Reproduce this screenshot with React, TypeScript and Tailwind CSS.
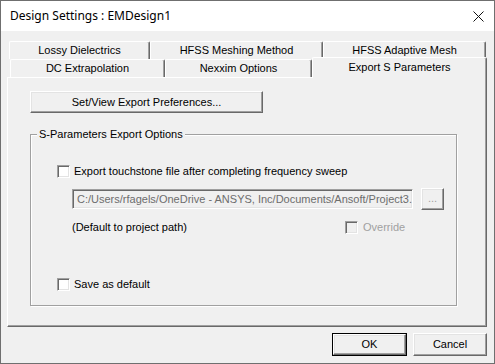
import React from "react";

const raised =
  "border border-t-white border-l-white border-r-[#696969] border-b-[#696969] shadow-[inset_-1px_-1px_0_#a0a0a0,inset_1px_1px_0_#e3e3e3]";
const sunken =
  "border border-t-[#a0a0a0] border-l-[#a0a0a0] border-r-white border-b-white shadow-[inset_1px_1px_0_#696969,inset_-1px_-1px_0_#e3e3e3]";

function Check({ disabled = false }: { disabled?: boolean }) {
  return (
    <div
      className={`w-[13px] h-[13px] shrink-0 ${sunken} ${disabled ? "bg-[#f0f0f0]" : "bg-white"}`}
    />
  );
}

function Tab({ label, w, selected = false }: { label: string; w: number; selected?: boolean }) {
  return (
    <div
      style={{ width: w }}
      className={
        selected
          ? "relative z-10 -mt-[2px] h-[21px] shrink-0 flex items-center justify-center pb-[2px] bg-[#f0f0f0] border-l border-t border-r border-l-white border-t-white border-r-[#696969] rounded-t-[2px] shadow-[inset_-1px_0_0_#a0a0a0]"
          : "h-[18px] shrink-0 flex items-center justify-center bg-[#f0f0f0] border-l border-t border-r border-l-white border-t-white border-r-[#696969] rounded-t-[2px] shadow-[inset_-1px_0_0_#a0a0a0]"
      }
    >
      <span className="text-[11px] leading-none text-black">{label}</span>
    </div>
  );
}

export default function App() {
  return (
    <div
      className="w-[495px] h-[364px] border border-[#6f6f6f] bg-[#f0f0f0] flex flex-col overflow-hidden"
      style={{ fontFamily: '"Liberation Sans", Arial, sans-serif' }}
    >
      <div className="h-[30px] bg-white flex items-center justify-between pl-[9px] pr-[9px] shrink-0">
        <span
          className="text-[12px] text-black"
          style={{ fontFamily: '"Noto Sans", "Open Sans", sans-serif' }}
        >
          Design Settings : EMDesign1
        </span>
        <svg width="11" height="11" viewBox="0 0 11 11" className="mr-[1px]">
          <path d="M0.5 0.5 L10.5 10.5 M10.5 0.5 L0.5 10.5" stroke="#111" strokeWidth="1" />
        </svg>
      </div>

      <div className="flex flex-col pl-[6px] pr-[7px] pt-[10px]">
        <div className="flex ml-[2px] h-[18px]">
          <Tab label="Lossy Dielectrics" w={141} />
          <Tab label="HFSS Meshing Method" w={173} />
          <Tab label="HFSS Adaptive Mesh" w={163} />
        </div>
        <div className="flex ml-[3px] h-[18px]">
          <Tab label="DC Extrapolation" w={155} />
          <Tab label="Nexxim Options" w={147} />
          <Tab label="Export S Parameters" w={175} selected />
        </div>

        <div className="w-[480px] h-[250px] border border-t-white border-l-white border-r-[#696969] border-b-[#696969] shadow-[inset_-1px_-1px_0_#a0a0a0] pl-[22px] pt-[13px] flex flex-col text-[11px] text-black">
          <button
            className={`w-[233px] h-[22px] bg-[#f0f0f0] ${raised} flex items-center justify-center text-[11px] text-black`}
          >
            Set/View Export Preferences...
          </button>

          <div className="relative mt-[21px] w-[427px] h-[172px] border border-[#a0a0a0] shadow-[inset_1px_1px_0_#fff,1px_1px_0_#fff] pl-[26px] pt-[29px] flex flex-col">
            <span className="absolute left-[6px] -top-[8px] px-[2px] bg-[#f0f0f0] leading-[14px]">
              S-Parameters Export Options
            </span>

            <div className="flex items-center gap-[4px] h-[14px]">
              <Check />
              <span>Export touchstone file after completing frequency sweep</span>
            </div>

            <div className="flex items-center mt-[10px] ml-[15px] gap-[8px]">
              <div
                className={`w-[341px] h-[20px] ${sunken} bg-[#f0f0f0] flex items-center pl-[4px] overflow-hidden whitespace-nowrap text-[#6d6d6d]`}
              >
                C:/Users/rfagels/OneDrive - ANSYS, Inc/Documents/Ansoft/Project3.
              </div>
              <div
                className={`w-[23px] h-[22px] ${raised} bg-[#f0f0f0] flex items-center justify-center text-[#a0a0a0] text-[11px] pb-[2px]`}
              >
                ...
              </div>
            </div>

            <div className="flex items-center ml-[15px] mt-[10px] h-[14px]">
              <span className="w-[273px]">(Default to project path)</span>
              <div className="flex items-center gap-[5px]">
                <Check disabled />
                <span className="text-[#a0a0a0]">Override</span>
              </div>
            </div>

            <div className="flex items-center gap-[4px] h-[14px] mt-[43px]">
              <Check />
              <span>Save as default</span>
            </div>
          </div>
        </div>

        <div className="flex justify-end gap-[6px] mt-[6px] pr-0">
          <div className="w-[75px] h-[23px] border border-black">
            <div
              className={`w-full h-full ${raised} bg-[#f0f0f0] flex items-center justify-center text-[11px] text-black`}
            >
              OK
            </div>
          </div>
          <div
            className={`w-[74px] h-[23px] ${raised} bg-[#f0f0f0] flex items-center justify-center text-[11px] text-black`}
          >
            Cancel
          </div>
        </div>
      </div>
    </div>
  );
}
